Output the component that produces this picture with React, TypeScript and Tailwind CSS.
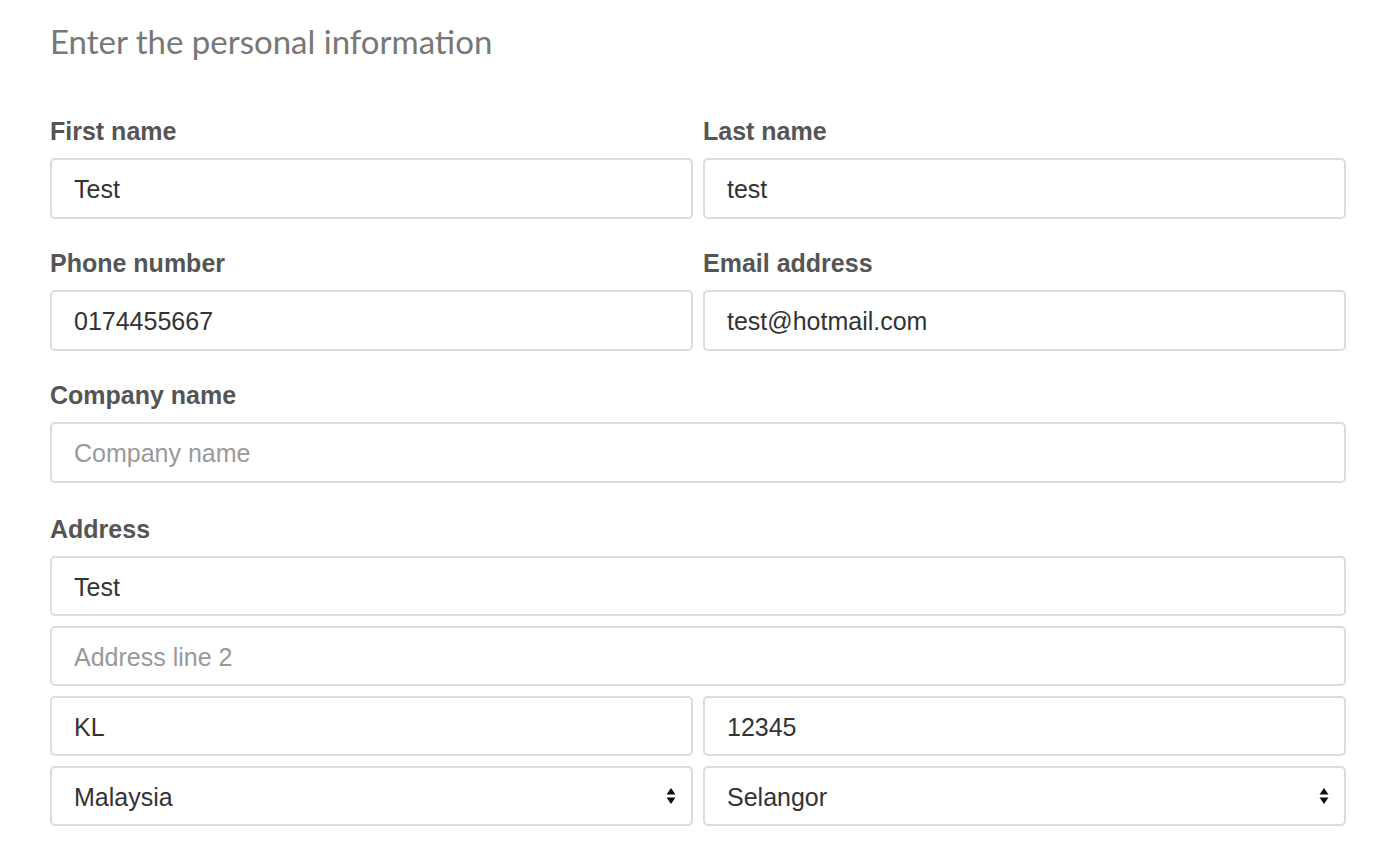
import { useState } from "react";

/* ── Small pieces ────────────────────────────────────────────── */

const baseCls =
  "block w-full rounded-[5px] border-2 border-[#dcdcdc] bg-white px-[22px] text-[25px] text-[#333] placeholder:text-[#999] outline-none font-['Liberation_Sans',Arial,sans-serif]";

function Label({ children }: { children: React.ReactNode }) {
  return (
    <label className="block text-[25px] leading-[34px] font-bold text-[#555] mb-[10px] font-['Liberation_Sans',Arial,sans-serif]">
      {children}
    </label>
  );
}

function Field({
  label,
  value,
  placeholder,
}: {
  label: string;
  value?: string;
  placeholder?: string;
}) {
  const [v, setV] = useState(value ?? "");
  return (
    <div>
      <Label>{label}</Label>
      <input
        className={baseCls + " h-[61px] pt-[2px]"}
        value={v}
        placeholder={placeholder}
        onChange={(e) => setV(e.target.value)}
      />
    </div>
  );
}

function TextInput({ value, placeholder }: { value?: string; placeholder?: string }) {
  const [v, setV] = useState(value ?? "");
  return (
    <input
      className={baseCls + " h-[60px] pt-[2px]"}
      value={v}
      placeholder={placeholder}
      onChange={(e) => setV(e.target.value)}
    />
  );
}

function Select({ value, options }: { value: string; options: string[] }) {
  const [v, setV] = useState(value);
  return (
    <div className="relative">
      <select
        className={baseCls + " h-[60px] appearance-none pt-[4px] pr-[50px]"}
        value={v}
        onChange={(e) => setV(e.target.value)}
      >
        {options.map((o) => (
          <option key={o}>{o}</option>
        ))}
      </select>
      {/* up / down arrows */}
      <svg
        className="pointer-events-none absolute right-[17px] top-1/2 -translate-y-1/2"
        width="10"
        height="18"
        viewBox="0 0 10 18"
      >
        <path d="M5 1 L9.5 7.5 H0.5 Z" fill="#111" />
        <path d="M5 17 L9.5 10.5 H0.5 Z" fill="#111" />
      </svg>
    </div>
  );
}

/* ── Page ────────────────────────────────────────────────────── */

export default function App() {
  return (
    <main className="min-h-screen bg-white pl-[50px] pr-[38px] pt-[22px]">
      <h1 className="text-[33px] leading-[38px] text-[#777] font-['Lato','Noto_Sans',sans-serif] mb-[54px]">
        Enter the personal information
      </h1>

      <div className="grid grid-cols-2 gap-x-[10px] gap-y-[27px]">
        <Field label="First name" value="Test" />
        <Field label="Last name" value="test" />
        <Field label="Phone number" value="0174455667" />
        <Field label="Email address" value="test@hotmail.com" />
        <div className="col-span-2">
          <Field label="Company name" placeholder="Company name" />
        </div>
      </div>

      <div className="mt-[29px]">
        <Label>Address</Label>
        <div className="flex flex-col gap-[10px]">
          <TextInput value="Test" />
          <TextInput placeholder="Address line 2" />
          <div className="grid grid-cols-2 gap-x-[10px] gap-y-[10px]">
            <TextInput value="KL" />
            <TextInput value="12345" />
            <Select value="Malaysia" options={["Malaysia", "Singapore", "Indonesia"]} />
            <Select value="Selangor" options={["Selangor", "Johor", "Penang"]} />
          </div>
        </div>
      </div>
    </main>
  );
}
